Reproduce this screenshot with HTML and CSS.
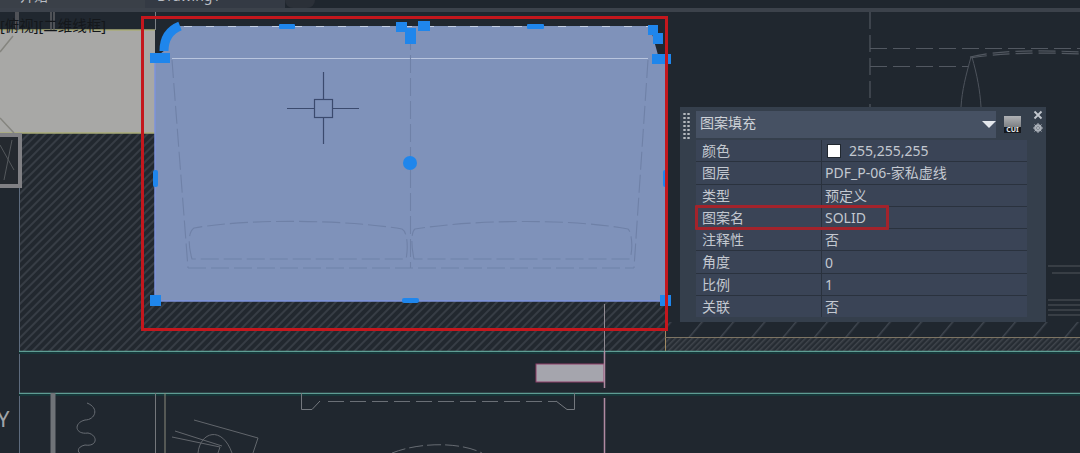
FILE: index.html
```html
<!DOCTYPE html>
<html lang="zh-CN">
<head>
  <meta charset="UTF-8" />
  <meta name="viewport" content="width=device-width, initial-scale=1.0"/>
  <title>Drawing1</title>
  <link rel="stylesheet" href="styles.css">
</head>
<body>

<div class="app">

  <!-- File tabs, cut off by the top of the picture -->
  <div class="tabs">
    <div class="tab tab-start"><span>开始</span></div>
    <div class="tab tab-drawing"><span>Drawing1</span><span class="tab-close">×</span></div>
    <div class="tab tab-add"><span>+</span></div>
  </div>

  <!-- Model space -->
  <div class="canvas">
    <svg class="drawing" width="1080" height="441" viewBox="0 12 1080 441">
      <defs>
        <pattern id="hatch" width="6" height="6" patternUnits="userSpaceOnUse" patternTransform="rotate(45)">
          <rect width="6" height="6" fill="#22282f"/>
          <rect width="2" height="6" fill="#373d45"/>
        </pattern>
        <pattern id="hatchFine" width="4" height="4" patternUnits="userSpaceOnUse" patternTransform="rotate(45)">
          <rect width="4" height="4" fill="#262c33"/>
          <rect width="1.5" height="4" fill="#40454c"/>
        </pattern>
        <pattern id="hatchWide" width="24" height="24" patternUnits="userSpaceOnUse" patternTransform="rotate(40)">
          <rect width="1.5" height="24" fill="#3f464f"/>
        </pattern>
      </defs>

      <!-- hatch and wall areas -->
      <rect x="20" y="133" width="645" height="218" fill="url(#hatch)"/>
      <rect x="665" y="322" width="415" height="15" fill="url(#hatchWide)"/>
      <rect x="665" y="337" width="415" height="14" fill="url(#hatchFine)"/>
      <rect x="0" y="30" width="155" height="103" fill="#a8a8a6"/>
      <path d="M0 30H155M0 133H155" stroke="#a9ac78" stroke-width="1.5"/>
      <path d="M13 36L0 52M0 118L14 133" stroke="#85857f" stroke-width="1.5" fill="none"/>
      <path d="M16 12V30M18 12V30M51 12V30M54 12V30" stroke="#5f6166" stroke-width="1.5"/>
      <rect x="-4" y="135" width="24" height="51" fill="#24292f" stroke="#808084" stroke-width="4"/>
      <path d="M0 145L14 170M12 140L4 180" stroke="#54585c" fill="none"/>
      <path d="M19.500 188V453" stroke="#5d6b7e"/>
      <path d="M665.500 330V351" stroke="#a08a62"/>
      <path d="M665 337.500H1080" stroke="#7d7463"/>
      <path d="M19 351.500H1080M19 393.500H1080" stroke="#5f9c93" stroke-width="1.500"/>
      <path d="M19 353H1080M19 395H1080" stroke="#17383a" stroke-width="2"/>

      <!-- furniture at the right of the sheet -->
      <g class="dash-line">
        <path d="M870 12V107"/>
        <path d="M870 48.500H1080"/>
        <path d="M870 66.500H968"/>
        <path d="M970 57C1000 50 1040 50 1080 52"/>
        <path d="M970 58C1000 53 1040 52 1080 54"/>
      </g>
      <path d="M971 57C966 75 962 90 961 107M972 57C977 75 980 90 981 107" stroke="#4d535c" fill="none"/>
      <path d="M1048 266H1080M1052 273H1080M1048 300H1080M1048 305H1080M1048 310H1080M1048 315H1080" stroke="#51565d"/>

      <!-- selected solid fill -->
      <path d="M178 26H650L658 55L665 60V301H155V58L165 50Q168 30 178 26Z" fill="#7f92ba"/>
      <path d="M155 58V301H665" fill="none" stroke="#7e93dc" stroke-width="1.500"/>
      <path d="M155.500 12V30" stroke="#7c8085"/>
      <path d="M172 58.500H648" stroke="#b9c5de" stroke-width="1.200"/>
      <path d="M184 26.500H650" stroke="#c3cee4" stroke-dasharray="8 14"/>
      <g class="sofa-line">
        <path d="M172 60L188 268"/>
        <path d="M648 60L634 268"/>
        <path d="M410.500 32V268"/>
        <path d="M188 268H634"/>
        <path d="M192 259C188 245 188 232 194 228C250 218 350 220 402 229C408 232 408 250 406 259Z"/>
        <path d="M414 259C411 245 411 232 415 229C470 220 570 218 628 229C632 232 633 250 630 259Z"/>
      </g>

      <!-- crosshair cursor -->
      <g class="cursor">
        <path d="M287 108.500H314M332 108.500H359M323.500 72V99M323.500 117V144"/>
        <rect x="314.500" y="99.500" width="18" height="18"/>
      </g>

      <!-- grips -->
      <g class="grip">
        <path d="M164 51C164 38 170 30 180 26" fill="none" stroke="#1f86ec" stroke-width="9"/>
        <rect x="150" y="53" width="20" height="10"/>
        <rect x="279" y="24" width="16" height="5" rx="1"/>
        <rect x="396" y="22" width="11" height="10"/>
        <rect x="405" y="28" width="11" height="16"/>
        <rect x="418" y="21" width="12" height="10"/>
        <rect x="527" y="24" width="17" height="5" rx="1"/>
        <rect x="648" y="25" width="10" height="10"/>
        <rect x="653" y="33" width="10" height="11"/>
        <rect x="652" y="54" width="19" height="10"/>
        <rect x="153" y="170" width="5" height="17" rx="2"/>
        <rect x="663" y="170" width="5" height="17" rx="2"/>
        <rect x="150" y="295" width="11" height="11"/>
        <rect x="402" y="298" width="17" height="5" rx="2"/>
        <rect x="660" y="295" width="11" height="11"/>
        <circle cx="410" cy="163" r="7"/>
      </g>

      <!-- section through the sheet -->
      <path d="M604.500 304V351" stroke="#8f8a92"/>
      <rect x="536" y="364" width="68" height="18" fill="#a5a5ad" stroke="#8d3f69"/>
      <path d="M604.500 351V388M604.500 398V453" stroke="#b08aa2" stroke-width="1.500"/>

      <!-- plan below the band -->
      <path d="M53 393V453" stroke="#6f7378" stroke-width="5"/>
      <path d="M155.500 393V453" stroke="#74777b"/>
      <path d="M165 393V453" stroke="#8a8b7c"/>
      <path d="M87 403C100 408 95 420 85 420C73 423 75 435 88 433C98 435 98 447 85 445C76 447 78 453 80 453" fill="none" stroke="#686d74"/>
      <path d="M301.500 393V409.500H312L320 401" fill="none" stroke="#74787e"/>
      <path d="M574.500 393V409.500H567L556 401" fill="none" stroke="#74787e"/>
      <path d="M328 401.500H556" stroke="#6a6f76" stroke-width="1.200" stroke-dasharray="16 6"/>
      <g class="door">
        <path d="M194 420L258 438L253 453"/>
        <path d="M172 437L220 447L218 453M175 431L222 446"/>
        <path d="M198 453C200 432 222 425 232 453"/>
      </g>
      <path d="M392 453C420 442 460 442 482 453" fill="none" stroke="#666b72" stroke-dasharray="14 4"/>
    </svg>

    <span class="view-label">[俯视][二维线框]</span>
    <span class="ucs-label">Y</span>

    <!-- Red mark-up round the fill -->
    <div class="mark-fill"></div>

    <!-- Quick properties palette -->
    <div class="panel">
      <div class="panel-grip"></div>
      <div class="panel-main">
        <div class="panel-head">
          <div class="panel-select">
            <span class="select-text">图案填充</span>
            <span class="select-arrow"></span>
          </div>
          <div class="cui-icon"><span>CUI</span></div>
        </div>
        <div class="props">
          <div class="prop-row"><div class="prop-name">颜色</div><div class="prop-value"><span class="swatch"></span>255,255,255</div></div>
          <div class="prop-row"><div class="prop-name">图层</div><div class="prop-value">PDF_P-06-家私虚线</div></div>
          <div class="prop-row"><div class="prop-name">类型</div><div class="prop-value">预定义</div></div>
          <div class="prop-row"><div class="prop-name">图案名</div><div class="prop-value">SOLID</div></div>
          <div class="prop-row"><div class="prop-name">注释性</div><div class="prop-value">否</div></div>
          <div class="prop-row"><div class="prop-name">角度</div><div class="prop-value">0</div></div>
          <div class="prop-row"><div class="prop-name">比例</div><div class="prop-value">1</div></div>
          <div class="prop-row"><div class="prop-name">关联</div><div class="prop-value">否</div></div>
        </div>
      </div>
      <div class="panel-side">
        <svg width="10" height="10" viewBox="0 0 10 10"><path d="M1.500 1.500L8.500 8.500M8.500 1.500L1.500 8.500" stroke="#c3c8cf" stroke-width="1.800"/></svg>
        <svg width="10" height="10" viewBox="0 0 10 10"><circle cx="5" cy="5" r="2.800" fill="none" stroke="#a9afb7" stroke-width="2"/><path d="M5 0V10M0 5H10M1.500 1.500L8.500 8.500M8.500 1.500L1.500 8.500" stroke="#a9afb7"/></svg>
      </div>
      <div class="mark-row"></div>
    </div>
  </div>

</div>

</body>
</html>
```

FILE: styles.css
```css
body {
  margin: 0;
  background: #20272f;
  font-family: "Noto Sans", "Noto Sans CJK SC", sans-serif;
  overflow: hidden;
}
.app {
  width: 1080px;
  height: 453px;
  display: flex;
  flex-direction: column;
  overflow: hidden;
}

/* tabs */
.tabs {
  height: 8px;
  display: flex;
  flex-shrink: 0;
  background: #1f262e;
  border-bottom: 4px solid #3c424b;
  overflow: hidden;
  color: #b9bdc3;
  font-size: 14px;
  line-height: 16px;
}
.tab {
  height: 8px;
  display: flex;
  align-items: flex-start;
}
.tab span {
  margin-top: -12px;
}
.tab-start {
  width: 125px;
  padding-left: 20px;
  background: #3a4048;
}
.tab-drawing {
  width: 128px;
  padding-left: 12px;
  gap: 42px;
  background: #343a44;
}
.tab-add {
  width: 20px;
  padding-left: 10px;
  background: #2b3038;
  border-radius: 0 0 8px 8px;
}

/* canvas */
.canvas {
  position: relative;
  flex: 1;
}
.drawing {
  display: block;
}
.dash-line path {
  fill: none;
  stroke: #525861;
  stroke-width: 1.2;
  stroke-dasharray: 17 6;
}
.sofa-line path {
  fill: none;
  stroke: #6f81a7;
  stroke-width: 1.1;
  stroke-dasharray: 18 5;
}
.cursor path,
.cursor rect {
  fill: none;
  stroke: #3b4a6e;
  stroke-width: 1.2;
}
.grip rect,
.grip circle {
  fill: #1f86ec;
}
.door path {
  fill: none;
  stroke: #62666c;
}
.view-label {
  position: absolute;
  left: 0;
  top: 4px;
  font-size: 14.5px;
  line-height: 18px;
  color: #14171b;
}
.ucs-label {
  position: absolute;
  left: -3px;
  top: 394px;
  font-size: 22px;
  line-height: 24px;
  color: #a0a4a9;
}
.mark-fill {
  position: absolute;
  left: 141px;
  top: 4px;
  width: 521px;
  height: 309px;
  border: 3px solid #c4171d;
}

/* palette */
.panel {
  position: absolute;
  left: 680px;
  top: 95px;
  width: 366px;
  height: 215px;
  display: flex;
  background: #353f4c;
  color: #c3c8d0;
  font-size: 14px;
}
.panel-grip {
  width: 16px;
  margin-top: 5px;
  height: 28px;
  background: radial-gradient(circle, #b5b9bf 1px, transparent 1.4px) 3px 0 / 3px 4px repeat-y,
              radial-gradient(circle, #b5b9bf 1px, transparent 1.4px) 7px 0 / 3px 4px repeat-y;
}
.panel-main {
  width: 331px;
}
.panel-head {
  display: flex;
  gap: 8px;
  align-items: center;
  margin-top: 4px;
  height: 27px;
}
.panel-select {
  width: 300px;
  height: 27px;
  padding: 0 0 0 4px;
  box-sizing: border-box;
  display: flex;
  justify-content: space-between;
  align-items: center;
  background: #465163;
  font-size: 14px;
  color: #cdd1d7;
}
.select-text {
  margin-top: -5px;
}
.select-arrow {
  width: 0;
  height: 0;
  border-left: 7px solid transparent;
  border-right: 7px solid transparent;
  border-top: 7px solid #e4e7ec;
}
.cui-icon {
  width: 17px;
  height: 17px;
  background: linear-gradient(#b0b2b5, #7f8286 62%, #15181d 62%);
  position: relative;
}
.cui-icon span {
  position: absolute;
  left: 0;
  right: 0;
  bottom: 0;
  font-size: 7px;
  line-height: 7px;
  font-weight: bold;
  text-align: center;
  color: #e3e5e8;
}
.props {
  margin-top: 2px;
  background: #2a323e;
  display: grid;
  grid-auto-rows: 21.3px;
  row-gap: 1px;
}
.prop-row {
  display: grid;
  grid-template-columns: 125px 1fr;
  column-gap: 1px;
  line-height: 21px;
}
.prop-name,
.prop-value {
  background: #3a4456;
  white-space: nowrap;
}
.prop-name {
  padding-left: 6px;
}
.prop-value {
  padding-left: 3px;
  display: flex;
  align-items: center;
}
.swatch {
  width: 14px;
  height: 14px;
  margin: 0 8px 0 2px;
  background: #fff;
  border: 1px solid #20272f;
  box-sizing: border-box;
}
.panel-side {
  width: 19px;
  padding-top: 3px;
  display: flex;
  flex-direction: column;
  align-items: flex-end;
  gap: 3px;
}
.panel-side svg {
  margin-right: 3px;
}
.mark-row {
  position: absolute;
  left: 15px;
  top: 98px;
  width: 188px;
  height: 19px;
  border: 3px solid #a3232b;
  border-radius: 1px;
}
```
